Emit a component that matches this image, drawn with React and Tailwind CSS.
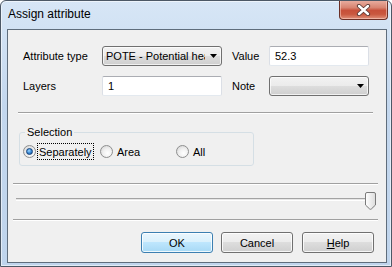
import React from "react";

const font = { fontFamily: '"Liberation Sans", Arial, sans-serif' };

function Combo({ w, text }) {
  return (
    <div
      className={`h-[20px] ${w} flex items-center rounded-[3px] border border-[#707070] bg-[linear-gradient(#f2f2f2,#ebebeb_50%,#dddddd_50%,#cfcfcf)] shadow-[inset_0_0_0_1px_rgba(255,255,255,0.7)] pl-[3px] pr-[4px]`}
    >
      <div className="flex-1 overflow-hidden whitespace-nowrap leading-[14px] mr-[5px]">{text}</div>
      <svg width="7" height="4" viewBox="0 0 7 4" className="shrink-0">
        <path d="M0 0H7L3.5 4Z" fill="#000" />
      </svg>
    </div>
  );
}

function TextBox({ w, text }) {
  return (
    <div
      className={`h-[20px] ${w} flex items-center bg-white border border-t-[#abadb3] border-l-[#dbdfe6] border-r-[#dbdfe6] border-b-[#e3e9ef] rounded-[2px] pl-[5px] leading-[14px]`}
    >
      {text}
    </div>
  );
}

function Radio({ checked }) {
  return (
    <div className="w-[13px] h-[13px] shrink-0 rounded-full border border-[#8e8f8f] bg-[radial-gradient(circle_at_60%_65%,#ffffff,#f0f0f0_45%,#cfcfcf)] flex items-center justify-center">
      {checked && (
        <div className="w-[7px] h-[7px] rounded-full border border-[#14417a] bg-[radial-gradient(circle_at_40%_35%,#9fd7ff,#3a8ad6_50%,#1a4f8e)]" />
      )}
    </div>
  );
}

function Sep({ cls }) {
  return <div className={`${cls} h-[2px] border-t border-t-[#a0a0a0] border-b border-b-white`} />;
}

function Button({ children, w, isDefault }) {
  return (
    <div
      className={`h-[21px] ${w} flex items-center justify-center rounded-[3px] border ${
        isDefault
          ? "border-[#3c7fb1] bg-[linear-gradient(#eaf6fd,#d9f0fc_50%,#bee6fd_50%,#a7d9f5)] shadow-[inset_0_0_0_1px_rgba(255,255,255,0.8)]"
          : "border-[#707070] bg-[linear-gradient(#f2f2f2,#ebebeb_50%,#dddddd_50%,#cfcfcf)] shadow-[inset_0_0_0_1px_rgba(255,255,255,0.8)]"
      } leading-[14px]`}
    >
      {children}
    </div>
  );
}

export default function App() {
  return (
    <div
      style={font}
      className="w-[392px] h-[267px] flex flex-col border border-[#4c5866] rounded-t-[6px] bg-[linear-gradient(to_bottom,#d7e6f6,#c3d7ee_40%,#bfd4ec)] shadow-[inset_0_0_0_1px_rgba(255,255,255,0.55)] pl-[6px] pr-[4px] pb-[3px] text-[11px] text-black overflow-hidden"
    >
      {/* Title bar */}
      <div className="h-[28px] flex items-start">
        <div className="flex-1 pl-px pt-[5px] text-[12px] leading-[16px] text-black">Assign attribute</div>
        <div className="-mt-px -mr-px w-[49px] h-[20px] rounded-b-[4px] border border-[#6b2f26] border-t-0 bg-[linear-gradient(#eab1a4,#d88471_40%,#c7503a_55%,#c9583f_75%,#e0907a)] shadow-[inset_0_0_0_1px_rgba(255,220,210,0.5)] flex items-center justify-center">
          <svg width="15" height="12" viewBox="0 0 15 12">
            <path d="M3 2L12 10M12 2L3 10" stroke="#5a3a36" strokeWidth="4.2" strokeLinecap="round" />
            <path d="M3 2L12 10M12 2L3 10" stroke="#ffffff" strokeWidth="2.4" strokeLinecap="round" />
          </svg>
        </div>
      </div>

      {/* Client area */}
      <div className="flex-1 border border-[#5f6d7c] bg-[#f0f0f0] flex flex-col pt-[16px]">
        <div className="flex items-center h-[20px]">
          <div className="w-[94px] pl-[15px] leading-[14px]">Attribute type</div>
          <Combo w="w-[120px]" text="POTE - Potential head" />
          <div className="w-[37px] ml-[10px] leading-[14px]">Value</div>
          <TextBox w="w-[100px]" text="52.3" />
        </div>
        <div className="flex items-center h-[20px] mt-[10px]">
          <div className="w-[94px] pl-[15px] leading-[14px]">Layers</div>
          <TextBox w="w-[120px]" text="1" />
          <div className="w-[37px] ml-[10px] leading-[14px]">Note</div>
          <Combo w="w-[100px]" text="" />
        </div>

        <Sep cls="mt-[16px] ml-[10px] w-[355px]" />

        <fieldset className="mt-[12px] ml-[11px] w-[235px] border border-[#d5dfe5] rounded-[3px] px-[3px] pb-[5px]">
          <legend className="ml-[2px] px-[2px] leading-[13px]">Selection</legend>
          <div className="flex h-[17px] mt-[4px]">
            <div className="w-[77px] flex items-center">
              <Radio checked />
              <span className="ml-[1px] h-[17px] flex items-center border border-dotted border-black px-[1px] leading-[14px]">
                Separately
              </span>
            </div>
            <div className="w-[76px] flex items-center">
              <Radio />
              <span className="ml-[4px] leading-[14px]">Area</span>
            </div>
            <div className="flex items-center">
              <Radio />
              <span className="ml-[4px] leading-[14px]">All</span>
            </div>
          </div>
        </fieldset>

        <Sep cls="mt-[17px] ml-[5px] w-[365px]" />

        <div className="relative mt-[7px] ml-[8px] w-[360px] h-[18px]">
          <div className="mt-[6px] w-[355px] h-[3px] border-t border-t-[#a3a3a3] bg-[#e6e6e6] border-b border-b-white" />
          <svg width="11" height="18" viewBox="0 0 11 18" className="absolute right-0 top-0">
            <defs>
              <linearGradient id="th" x1="0" y1="0" x2="1" y2="0">
                <stop offset="0" stopColor="#ffffff" />
                <stop offset="1" stopColor="#dcdcdc" />
              </linearGradient>
            </defs>
            <path
              d="M2 0.5H9A1.5 1.5 0 0 1 10.5 2V13L6.3 17Q5.5 17.6 4.7 17L0.5 13V2A1.5 1.5 0 0 1 2 0.5Z"
              fill="url(#th)"
              stroke="#7a7a7a"
            />
          </svg>
        </div>

        <Sep cls="mt-[9px] ml-[5px] w-[365px]" />

        <div className="flex mt-[11px] ml-[133px]">
          <Button w="w-[72px]" isDefault>
            OK
          </Button>
          <div className="ml-[8px]">
            <Button w="w-[72px]">Cancel</Button>
          </div>
          <div className="ml-[9px]">
            <Button w="w-[72px]">
              <span>
                <span className="underline">H</span>elp
              </span>
            </Button>
          </div>
        </div>
      </div>
    </div>
  );
}
